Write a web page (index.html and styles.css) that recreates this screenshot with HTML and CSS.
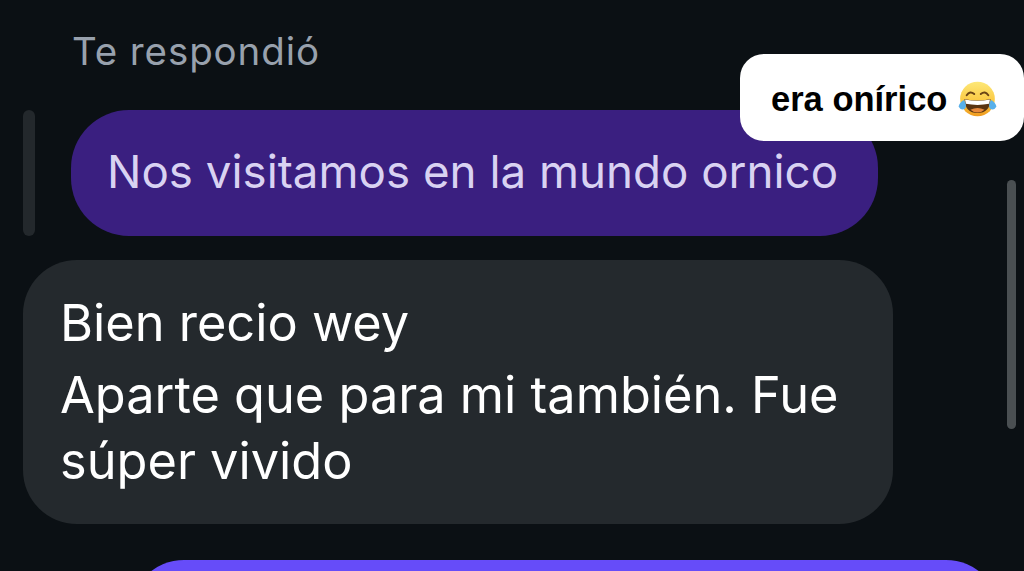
FILE: index.html
```html
<!DOCTYPE html>
<html lang="en">
<head>
    <meta charset="UTF-8">
    <meta name="viewport" content="width=device-width, initial-scale=1.0">
    <title>Te respondió</title>
    <link rel="stylesheet" href="styles.css">
</head>
<body>
    <div class="chat">
        <div class="reply-label">Te respondió</div>
        <div class="reply-row">
            <div class="reply-bar"></div>
            <div class="reply-bubble">Nos visitamos en la mundo ornico</div>
        </div>
        <div class="message">
            <p>Bien recio wey</p>
            <p>Aparte que para mi también. Fue súper vivido</p>
        </div>
        <div class="own-bubble"></div>
    </div>

    <div class="scrollbar"></div>

    <div class="sticker">
        <span>era onírico</span>
        <svg class="emoji" viewBox="0 0 36 36" aria-hidden="true">
            <defs>
                <linearGradient id="face" x1="0" y1="0" x2="0" y2="1">
                    <stop offset="0" stop-color="#fde878"/>
                    <stop offset="0.6" stop-color="#fbc73f"/>
                    <stop offset="1" stop-color="#ef9a1e"/>
                </linearGradient>
            </defs>
            <circle cx="18" cy="17.5" r="16" fill="url(#face)"/>
            <path d="M8 14 Q11 9.5 15 13" fill="none" stroke="#6b4415" stroke-width="1.8" stroke-linecap="round"/>
            <path d="M21 13 Q25 9.5 28 14" fill="none" stroke="#6b4415" stroke-width="1.8" stroke-linecap="round"/>
            <path d="M6 17.5 Q18 20.5 30 17.5 Q29.5 30.5 18 30.5 Q6.5 30.5 6 17.5 Z" fill="#5a3410"/>
            <path d="M6.5 18 Q18 20.5 29.5 18 L28.8 22 Q18 24 7.2 22 Z" fill="#fff"/>
            <path d="M11.5 27.5 Q18 24 24.5 27.5 Q22 30 18 30 Q14 30 11.5 27.5 Z" fill="#e8893c"/>
            <path d="M0.5 24.5 Q1.5 20.5 5.5 18.5 Q8.5 23 6.5 26.5 Q2.5 28.5 0.5 24.5 Z" fill="#58b0ea"/>
            <path d="M35.5 24.5 Q34.5 20.5 30.5 18.5 Q27.5 23 29.5 26.5 Q33.5 28.5 35.5 24.5 Z" fill="#58b0ea"/>
        </svg>
    </div>
</body>
</html>
```

FILE: styles.css
```css
* {
    margin: 0;
    padding: 0;
    box-sizing: border-box;
}

html, body {
    height: 100%;
    overflow: hidden;
}

body {
    background: #0b1014;
    font-family: Inter, "Liberation Sans", sans-serif;
    position: relative;
}

.chat {
    height: 571px;
    overflow: hidden;
    padding: 26px 0 0 23px;
}

.reply-label {
    margin-left: 49px;
    height: 50px;
    line-height: 50px;
    font-size: 38.5px;
    letter-spacing: 0.9px;
    color: #98a1ad;
}

.reply-row {
    display: flex;
    gap: 36px;
    margin-top: 34px;
}

.reply-bar {
    width: 12px;
    height: 126px;
    border-radius: 6px;
    background: #23282c;
}

.reply-bubble {
    width: 807px;
    height: 126px;
    padding-left: 36px;
    line-height: 124px;
    font-size: 45.7px;
    color: #d9d2f2;
    background: #3a1f80;
    border-radius: 58px;
}

.message {
    width: 870px;
    height: 264px;
    margin-top: 24px;
    padding: 30px 37px 0;
    font-size: 50.5px;
    line-height: 66px;
    color: #fff;
    background: #24292d;
    border-radius: 54px;
}

.message p + p {
    margin-top: 6px;
}

.own-bubble {
    width: 870px;
    height: 120px;
    margin: 36px 0 0 107px;
    background: #664cf9;
    border-radius: 54px;
}

.scrollbar {
    position: absolute;
    top: 180px;
    right: 8px;
    width: 9px;
    height: 249px;
    border-radius: 5px;
    background: #4a4f52;
}

.sticker {
    position: absolute;
    top: 54px;
    left: 740px;
    width: 284px;
    height: 87px;
    padding: 3px 0 0 31px;
    display: flex;
    align-items: center;
    gap: 11px;
    background: #fff;
    border-radius: 24px;
    font-family: "Liberation Sans", sans-serif;
    font-weight: 700;
    font-size: 34.5px;
    color: #000;
}

.emoji {
    width: 39px;
    height: 39px;
}
```
